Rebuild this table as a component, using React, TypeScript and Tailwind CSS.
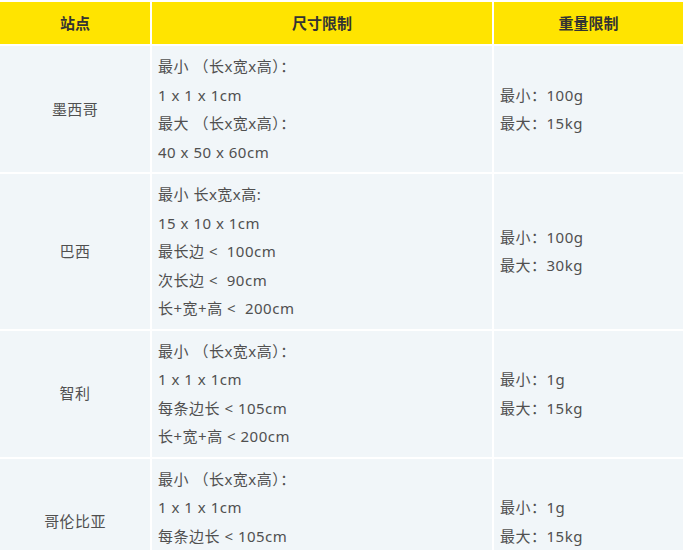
const rows = [
  {
    site: '墨西哥',
    size: ['最小 （长x宽x高）：', '1 x 1 x 1cm', '最大 （长x宽x高）：', '40 x 50 x 60cm'],
    weight: ['最小：100g', '最大：15kg'],
  },
  {
    site: '巴西',
    size: ['最小 长x宽x高:', '15 x 10 x 1cm', '最长边 <  100cm', '次长边 <  90cm', '长+宽+高 <  200cm'],
    weight: ['最小：100g', '最大：30kg'],
  },
  {
    site: '智利',
    size: ['最小 （长x宽x高）：', '1 x 1 x 1cm', '每条边长 < 105cm', '长+宽+高 < 200cm'],
    weight: ['最小：1g', '最大：15kg'],
  },
  {
    site: '哥伦比亚',
    size: ['最小 （长x宽x高）：', '1 x 1 x 1cm', '每条边长 < 105cm', '长+宽+高 < 200cm'],
    weight: ['最小：1g', '最大：15kg'],
  },
]

export default function App() {
  return (
    <div
      className="w-[683px] h-[550px] overflow-hidden bg-white pt-[2px]"
      style={{ fontFamily: '"Noto Sans", "Noto Sans CJK SC", sans-serif' }}
    >
      <div className="grid grid-cols-[150px_340px_1fr] gap-[2px] bg-white">
        {/* Header */}
        <div className="h-[42px] bg-[#ffe400] flex items-center justify-center text-[15px] font-bold text-[#333]">站点</div>
        <div className="h-[42px] bg-[#ffe400] flex items-center justify-center text-[15px] font-bold text-[#333]">尺寸限制</div>
        <div className="h-[42px] bg-[#ffe400] flex items-center justify-center text-[15px] font-bold text-[#333]">重量限制</div>

        {rows.map((row) => (
          <Row key={row.site} {...row} />
        ))}
      </div>
    </div>
  )
}

function Row({ site, size, weight }: { site: string; size: string[]; weight: string[] }) {
  return (
    <>
      <div className="bg-[#f1f6f9] flex items-center justify-center text-[15px] tracking-[0.4px] text-[#505050]">{site}</div>
      <div className="bg-[#f1f6f9] py-[6px] px-[6px] text-[15px] leading-[28.5px] tracking-[0.5px] text-[#505050] whitespace-pre">
        {size.map((line, i) => (
          <div key={i}>{line}</div>
        ))}
      </div>
      <div className="bg-[#f1f6f9] flex flex-col justify-center px-[6px] text-[15px] leading-[28.5px] tracking-[0.5px] text-[#505050]">
        {weight.map((line, i) => (
          <div key={i}>{line}</div>
        ))}
      </div>
    </>
  )
}
